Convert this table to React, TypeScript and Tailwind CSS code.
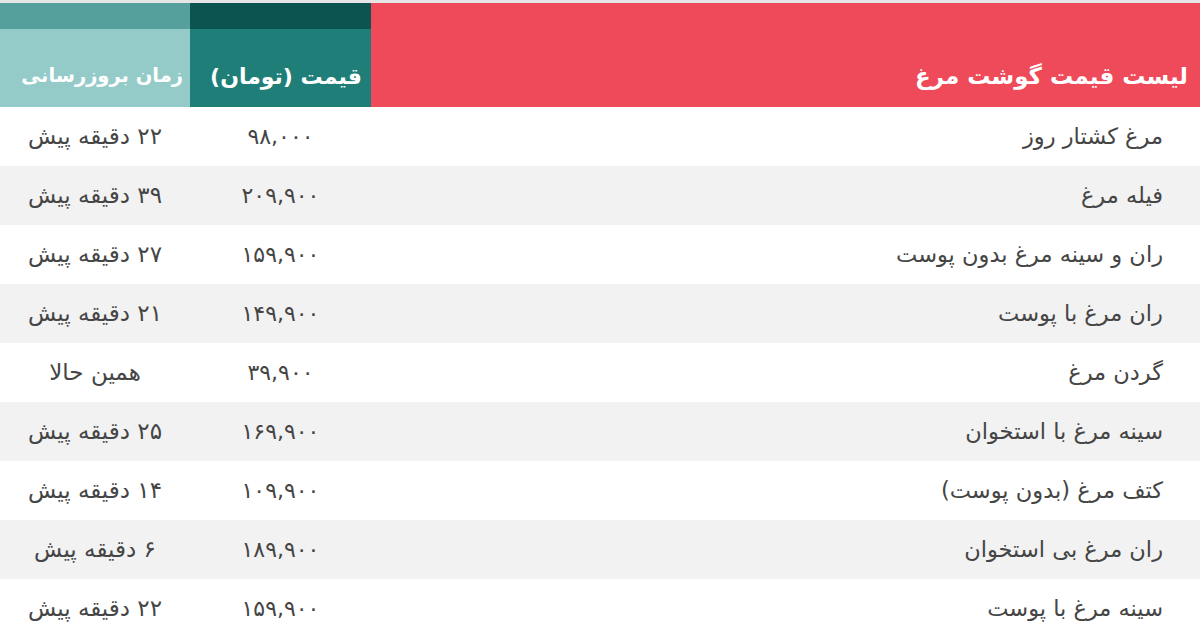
import React from "react";

const rows: [string, string, string][] = [
  ["مرغ کشتار روز", "۹۸,۰۰۰", "۲۲ دقیقه پیش"],
  ["فیله مرغ", "۲۰۹,۹۰۰", "۳۹ دقیقه پیش"],
  ["ران و سینه مرغ بدون پوست", "۱۵۹,۹۰۰", "۲۷ دقیقه پیش"],
  ["ران مرغ با پوست", "۱۴۹,۹۰۰", "۲۱ دقیقه پیش"],
  ["گردن مرغ", "۳۹,۹۰۰", "همین حالا"],
  ["سینه مرغ با استخوان", "۱۶۹,۹۰۰", "۲۵ دقیقه پیش"],
  ["کتف مرغ (بدون پوست)", "۱۰۹,۹۰۰", "۱۴ دقیقه پیش"],
  ["ران مرغ بی استخوان", "۱۸۹,۹۰۰", "۶ دقیقه پیش"],
  ["سینه مرغ با پوست", "۱۵۹,۹۰۰", "۲۲ دقیقه پیش"],
];

export default function App() {
  return (
    <div
      dir="rtl"
      className="w-[1200px] h-[640px] overflow-hidden bg-white border-t-[3px] border-[#e6e6e6]"
      style={{ fontFamily: '"DejaVu Sans", "Noto Sans", sans-serif' }}
    >
      <div className="grid grid-cols-[829px_181px_190px]">
        <div className="bg-[#ef4a5a] h-[26px]" />
        <div className="bg-[#0c544f] h-[26px]" />
        <div className="bg-[#55a09c] h-[26px]" />
        <div className="bg-[#ef4a5a] h-[78px] flex items-center pr-[12px] pt-[16px] text-white text-[23px] font-semibold">
          لیست قیمت گوشت مرغ
        </div>
        <div className="bg-[#1f7f78] h-[78px] flex items-center pr-[9px] pt-[16px] text-white text-[22px] font-semibold">
          قیمت (تومان)
        </div>
        <div className="bg-[#94cbc9] h-[78px] flex items-center pr-[7px] pt-[16px] text-white text-[19.5px] font-semibold whitespace-nowrap">
          زمان بروزرسانی
        </div>
        {rows.map(([name, price, time], i) => {
          const bg = i % 2 === 1 ? "bg-[#f2f2f2]" : "bg-white";
          return (
            <React.Fragment key={i}>
              <div className={`${bg} h-[59px] flex items-center pr-[37px] text-[22.5px] text-[#454545]`}>
                {name}
              </div>
              <div className={`${bg} h-[59px] flex items-center justify-center text-[22px] text-[#454545]`}>
                {price}
              </div>
              <div className={`${bg} h-[59px] flex items-center justify-center text-[23px] text-[#454545] whitespace-nowrap`}>
                {time}
              </div>
            </React.Fragment>
          );
        })}
      </div>
    </div>
  );
}
